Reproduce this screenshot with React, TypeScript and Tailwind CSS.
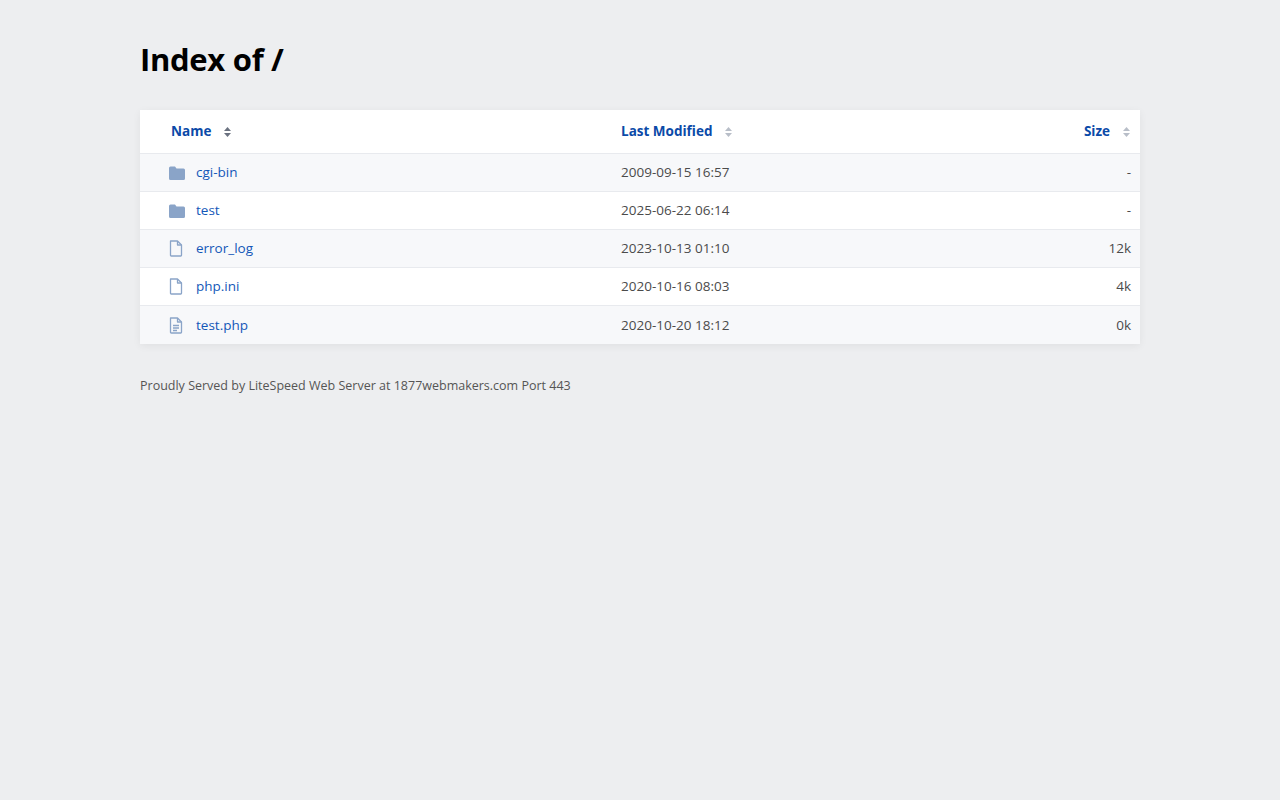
import React from "react";

const Sort = ({ dark }: { dark?: boolean }) => (
  <svg width="9" height="12" viewBox="0 0 9 12" className="ml-3 inline-block">
    <path d="M4.5 1 L8 5 H1 Z" fill={dark ? "#6b7280" : "#b8bec8"} />
    <path d="M4.5 11 L8 7 H1 Z" fill={dark ? "#6b7280" : "#b8bec8"} />
  </svg>
);

const Folder = () => (
  <svg width="16" height="14" viewBox="0 0 16 14">
    <path d="M0 2 Q0 0.5 1.5 0.5 H6 L7.5 2.5 H14.5 Q16 2.5 16 4 V12.5 Q16 14 14.5 14 H1.5 Q0 14 0 12.5 Z" fill="#8aa4c8" />
  </svg>
);

const File = ({ lines }: { lines?: boolean }) => (
  <svg width="14" height="17" viewBox="0 0 14 17" fill="none" stroke="#8aa4c8" strokeWidth="1.3">
    <path d="M1.5 1 H8.5 L12.5 5 V15.2 Q12.5 16 11.7 16 H2.3 Q1.5 16 1.5 15.2 Z" strokeLinejoin="round" />
    <path d="M8.5 1 V5 H12.5" strokeLinejoin="round" />
    {lines && <path d="M4 8.5 H10 M4 11 H10 M4 13.5 H8" />}
  </svg>
);

const rows = [
  { name: "cgi-bin", type: "dir", date: "2009-09-15 16:57", size: "-" },
  { name: "test", type: "dir", date: "2025-06-22 06:14", size: "-" },
  { name: "error_log", type: "file", date: "2023-10-13 01:10", size: "12k" },
  { name: "php.ini", type: "file", date: "2020-10-16 08:03", size: "4k" },
  { name: "test.php", type: "text", date: "2020-10-20 18:12", size: "0k" },
];

export default function App() {
  return (
    <div className="min-h-[800px] bg-[#edeef0] text-[#4b4b4b]" style={{ fontFamily: '"Open Sans", "Noto Sans", sans-serif' }}>
      <div className="w-[1000px] ml-[140px] pt-[36px]">
        <h1 className="text-[31px] font-bold text-black leading-[46px] tracking-[-0.3px]">Index of /</h1>
        <div className="mt-[28px] bg-white shadow-[0_2px_8px_rgba(0,0,0,0.06)]">
          <div className="flex h-[44px] items-center border-b border-[#e8eaee] text-[13.5px] font-bold text-[#0b4aa8]">
            <div className="w-[481px] pl-[31px] flex items-center">Name<Sort dark /></div>
            <div className="flex-1 flex items-center">Last Modified<Sort /></div>
            <div className="pr-[9px] flex items-center">Size<Sort /></div>
          </div>
          {rows.map((r, i) => (
            <div key={r.name} className={`flex h-[38px] items-center text-[13.5px] ${i % 2 === 0 ? "bg-[#f7f8fa]" : "bg-white"} ${i < rows.length - 1 ? "border-b border-[#e8eaee]" : ""}`}>
              <div className="w-[481px] pl-[29px] flex items-center">
                <span className="w-[27px] flex items-center">
                  {r.type === "dir" ? <Folder /> : <File lines={r.type === "text"} />}
                </span>
                <span className="text-[#1357b8]">{r.name}</span>
              </div>
              <div className="flex-1">{r.date}</div>
              <div className="pr-[9px] text-right">{r.size}</div>
            </div>
          ))}
        </div>
        <p className="mt-[33px] text-[12.5px] text-[#555]">Proudly Served by LiteSpeed Web Server at 1877webmakers.com Port 443</p>
      </div>
    </div>
  );
}
